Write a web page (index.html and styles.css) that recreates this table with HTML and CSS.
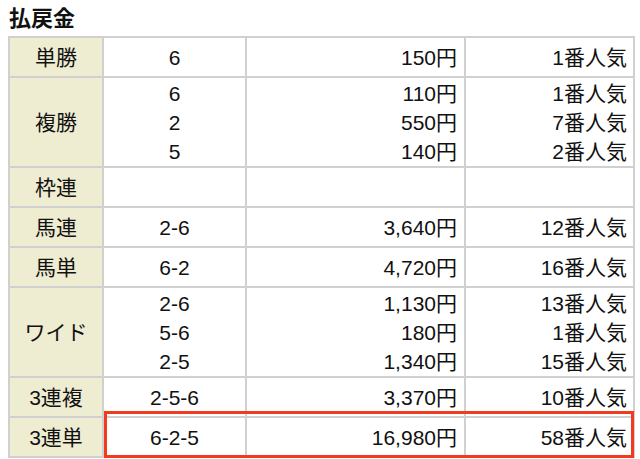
FILE: index.html
```html
<!DOCTYPE html>
<html lang="ja">
<head>
<meta charset="utf-8">
<link rel="stylesheet" href="styles.css">
</head>
<body>
<h2 class="title">払戻金</h2>
<div class="payout-wrap">
  <div class="payout">
    <div class="cell label">単勝</div>
    <div class="cell num">6</div>
    <div class="cell yen">150円</div>
    <div class="cell pop">1番人気</div>

    <div class="cell label">複勝</div>
    <div class="cell num multi">6<br>2<br>5</div>
    <div class="cell yen multi">110円<br>550円<br>140円</div>
    <div class="cell pop multi">1番人気<br>7番人気<br>2番人気</div>

    <div class="cell label">枠連</div>
    <div class="cell num"></div>
    <div class="cell yen"></div>
    <div class="cell pop"></div>

    <div class="cell label">馬連</div>
    <div class="cell num">2-6</div>
    <div class="cell yen">3,640円</div>
    <div class="cell pop">12番人気</div>

    <div class="cell label">馬単</div>
    <div class="cell num">6-2</div>
    <div class="cell yen">4,720円</div>
    <div class="cell pop">16番人気</div>

    <div class="cell label">ワイド</div>
    <div class="cell num multi">2-6<br>5-6<br>2-5</div>
    <div class="cell yen multi">1,130円<br>180円<br>1,340円</div>
    <div class="cell pop multi">13番人気<br>1番人気<br>15番人気</div>

    <div class="cell label">3連複</div>
    <div class="cell num">2-5-6</div>
    <div class="cell yen">3,370円</div>
    <div class="cell pop">10番人気</div>

    <div class="cell label">3連単</div>
    <div class="cell num">6-2-5</div>
    <div class="cell yen">16,980円</div>
    <div class="cell pop">58番人気</div>
  </div>
  <div class="highlight"></div>
</div>
</body>
</html>
```

FILE: styles.css
```css
html, body {
  margin: 0;
  padding: 0;
  background: #fff;
}
body {
  padding: 0 8px;
  font-family: "Liberation Sans", "Noto Sans CJK JP", sans-serif;
  color: #111;
}
.title {
  margin: 0;
  padding-top: 5px;
  padding-left: 1px;
  font-size: 22px;
  line-height: 28px;
  height: 36px;
  font-weight: bold;
  box-sizing: border-box;
}
.payout-wrap {
  position: relative;
  width: 627px;
}
.payout {
  display: grid;
  grid-template-columns: 92px 141px 217px 167px;
  gap: 2px;
  padding: 2px;
  background: #d0d0d0;
  font-size: 21px;
}
.cell {
  background: #fff;
  min-height: 38px;
  display: flex;
  flex-direction: column;
  justify-content: center;
  line-height: 29px;
}
.cell.multi {
  padding-top: 1px;
  height: 88px;
  box-sizing: border-box;
}
.label {
  background: #eeecd1;
  align-items: center;
  text-align: center;
}
.num {
  text-align: center;
}
.yen {
  text-align: right;
  padding-right: 7px;
}
.pop {
  text-align: right;
  padding-right: 6px;
}
.highlight {
  position: absolute;
  left: 96px;
  top: 375px;
  width: 530px;
  height: 47px;
  border: 3px solid #f23a1f;
  box-sizing: border-box;
}
```
